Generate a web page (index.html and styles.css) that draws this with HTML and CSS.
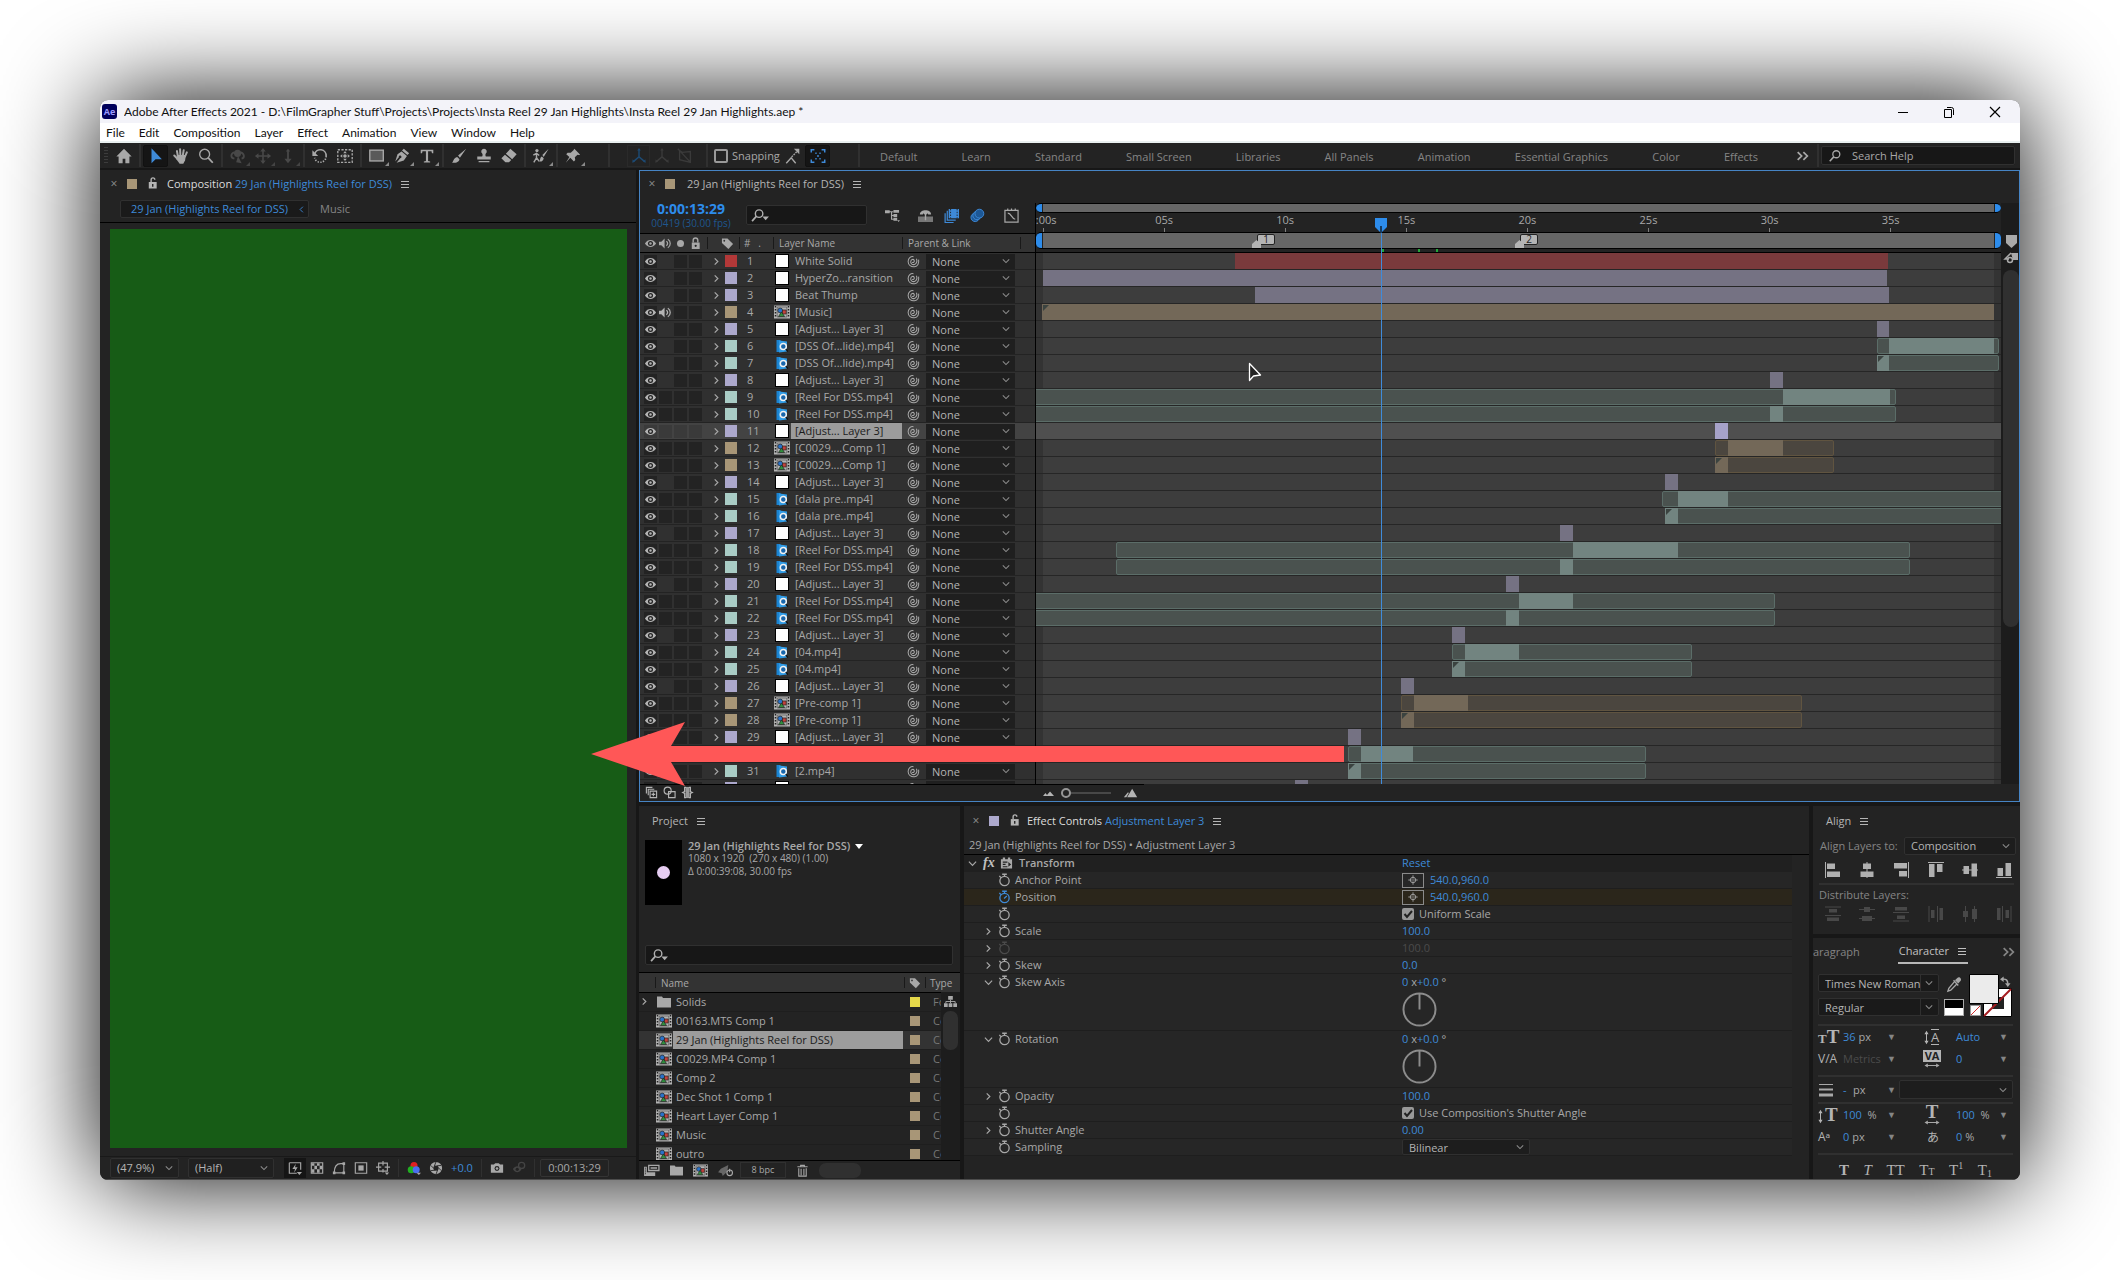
FILE: index.html
```html
<!DOCTYPE html>
<html lang="en">
<head>
<meta charset="utf-8">
<title>Adobe After Effects 2021</title>
<link rel="stylesheet" href="styles.css">
</head>
<body>
<svg class="defs" aria-hidden="true">
  <symbol id="home" viewBox="0 0 20 20"><path fill="currentColor" d="M10 2 1.500 10.500H4V18h4.500v-5h3v5H16v-7.500h2.500z"/></symbol>
  <symbol id="arrow" viewBox="0 0 20 20"><path fill="currentColor" d="M5 1.500V18l4.500-4.500h7z"/></symbol>
  <symbol id="hand" viewBox="0 0 20 20"><path fill="none" stroke="currentColor" stroke-width="2.200" stroke-linecap="round" d="M6.500 10 5.500 4.500M9.300 9.500 9 2.500M12 9.500l1-6M14.500 10.500l2-4.500M6 13 2.500 9.500"/><path fill="currentColor" d="M5.500 9h10l-1 6-2 3.500h-4L5 14z"/></symbol>
  <symbol id="zoom" viewBox="0 0 20 20"><g fill="none" stroke="currentColor"><circle cx="8.500" cy="8" r="5.500" stroke-width="1.500"/><path stroke-width="2" d="m12.500 12 5 5.500"/></g></symbol>
  <symbol id="orbit" viewBox="0 0 20 20"><g fill="none" stroke="currentColor" stroke-width="2"><path d="M6 6C2 7 1 12 6 13M13 6c4 1 5 6 1 7"/></g><circle cx="9.500" cy="7" r="4" fill="currentColor"/><path fill="currentColor" d="m10 10 4 8-6-1z"/></symbol>
  <symbol id="move" viewBox="0 0 20 20"><path fill="none" stroke="currentColor" stroke-width="1.800" d="M10 3v14M3 10h14"/><path fill="currentColor" d="m10 1 3 4H7zM10 19l3-4H7zM1 10l4-3v6zM19 10l-4-3v6z"/></symbol>
  <symbol id="dolly" viewBox="0 0 20 20"><path fill="currentColor" d="m10 2 2.500 3H11v8h3l-4 5-4-5h3V5H7.500z"/></symbol>
  <symbol id="rotate" viewBox="0 0 20 20"><path fill="none" stroke="currentColor" stroke-width="1.800" d="M4 8a6.500 6.500 0 0 1 12.800 2"/><path fill="none" stroke="currentColor" stroke-width="1.800" stroke-dasharray="1.500 1.500" d="M16.800 10A6.500 6.500 0 0 1 4 12"/><path fill="currentColor" d="M1.500 3.500v6.500H8z"/></symbol>
  <symbol id="panbehind" viewBox="0 0 20 20"><rect x="2" y="3" width="16" height="14" fill="none" stroke="currentColor" stroke-width="1.500" stroke-dasharray="2.500 1.500"/><circle cx="10" cy="10" r="2" fill="currentColor"/><path fill="currentColor" d="m10 4.500 2 2.500H8zM10 15.500 12 13H8zM4.500 10 7 8v4zM15.500 10 13 8v4z"/></symbol>
  <symbol id="rect" viewBox="0 0 20 20"><rect x="2" y="3.500" width="15" height="12" fill="#5a5a5a" stroke="currentColor" stroke-width="1.500"/></symbol>
  <symbol id="pen" viewBox="0 0 20 20"><path fill="currentColor" d="m12 2 6 5-2 2-6-5zM9.500 5l6 5-3.500 5L4 17.500l4-5a1.500 1.500 0 1 0-1.500-1L2.500 16 5 8z"/></symbol>
  <symbol id="type" viewBox="0 0 20 20"><path fill="currentColor" d="M3 3h14v4h-1.500L15 4.800h-3.800V15.500l2.300.5v1.200h-7V16l2.300-.5V4.800H5L4.500 7H3z"/></symbol>
  <symbol id="brush" viewBox="0 0 20 20"><path fill="currentColor" d="M18 2 9 9.500l2 2.500zM8 11l2.500 2.500C10 17 6 18 2 17.500c2-1 1.500-5.500 6-6.500z"/></symbol>
  <symbol id="stamp" viewBox="0 0 20 20"><path fill="currentColor" d="M10 2a3 3 0 0 1 2 5.300c-1 1.500 0 3.200 0 3.200h5.500V14h-15v-3.500H8s1-1.700 0-3.200A3 3 0 0 1 10 2zM4 15.500h12V17H4z"/></symbol>
  <symbol id="eraser" viewBox="0 0 20 20"><path fill="currentColor" d="m11.500 2 7 6-5 5.500-7-6zM5.500 8.500l7 6L10 17H6l-4.500-4.500z"/></symbol>
  <symbol id="roto" viewBox="0 0 20 20"><circle cx="5.500" cy="4" r="1.800" fill="currentColor"/><path fill="none" stroke="currentColor" stroke-width="1.600" d="M1.500 9 5 7l3 2.500M5 7v5l-3 5M5 12l3 4"/><path fill="currentColor" d="m18.500 2-7 7 1.500 2zM11 10.500l2 2C12.500 16 10 16.500 8 16c1.500-1 .5-4.500 3-5.500z"/></symbol>
  <symbol id="pin" viewBox="0 0 20 20"><path fill="currentColor" d="m11.500 2 6.500 6.500-1.500.5-1.500-.5-3 3 .5 3-1.500 1.500-4-4-5 5.500 4-6.500L2.500 8l1.500-1.500h3.500l3-3z"/></symbol>
  <symbol id="axis" viewBox="0 0 20 20"><path fill="none" stroke="currentColor" stroke-width="1.600" d="M10 3v8l-6 5M10 11l6 5"/><path fill="currentColor" d="m10 1 2 3H8zM2.500 17.500l.5-4 2.500 3zM17.500 17.500l-.5-4-2.500 3z"/></symbol>
  <symbol id="axisview" viewBox="0 0 20 20"><path fill="none" stroke="currentColor" stroke-width="1.500" d="M4 4v10l12 3V5l-9 1zM4 4l12 13M2 2l3 3"/></symbol>
  <symbol id="snapa" viewBox="0 0 20 20"><path fill="none" stroke="currentColor" stroke-width="1.500" d="m2.500 18 5.500-6 5 6"/><path stroke="currentColor" stroke-width="1.500" stroke-dasharray="2 1" d="m8.500 11 6-6"/><path fill="currentColor" d="M11 2h6v6z"/></symbol>
  <symbol id="snapb" viewBox="0 0 20 20"><path fill="none" stroke="currentColor" stroke-width="1.600" d="M2.500 6V3H6M14 3h3.500v3M17.500 14v3H14M6 17H2.500v-3M7 7h1.500M11.500 7H13M7 13h1.500M11.500 13H13M10 9v2"/></symbol>
  <symbol id="search" viewBox="0 0 16 16"><circle cx="9.500" cy="6" r="4" fill="none" stroke="currentColor" stroke-width="1.500"/><path stroke="currentColor" stroke-width="1.800" d="M6.500 9 2 14"/></symbol>
  <symbol id="searchmenu" viewBox="0 0 20 16"><circle cx="8.500" cy="6" r="4" fill="none" stroke="currentColor" stroke-width="1.500"/><path stroke="currentColor" stroke-width="1.800" d="M5.500 9 1 14"/><path fill="currentColor" d="M12 9h7l-3.500 4z"/></symbol>
  <symbol id="more" viewBox="0 0 16 16"><path fill="none" stroke="currentColor" stroke-width="2" d="m2.500 3.500 4.500 4.500-4.500 4.500M9 3.500 13.500 8 9 12.500"/></symbol>
  <symbol id="lock" viewBox="0 0 14 14"><path fill="currentColor" d="M3 6h8.500v7H3z"/><path fill="none" stroke="currentColor" stroke-width="1.500" d="M4.500 6V3.500a2.500 2.500 0 0 1 5 0V6"/><circle cx="7.200" cy="9.500" r="1.200" fill="#232323"/></symbol>
  <symbol id="unlock" viewBox="0 0 14 14"><path fill="currentColor" d="M3 6h8.500v7H3z"/><path fill="none" stroke="currentColor" stroke-width="1.500" d="M5.500 6V3.500a2 2 0 0 1 4 0"/><path fill="#232323" d="M6.500 8h1.500v3H6.500z"/></symbol>
  <symbol id="menu" viewBox="0 0 10 10"><path stroke="currentColor" stroke-width="1.200" d="M1 2h8M1 5h8M1 8h8"/></symbol>
  <symbol id="chev" viewBox="0 0 10 10"><path fill="none" stroke="currentColor" stroke-width="1.300" d="m1 3 4 4 4-4"/></symbol>
  <symbol id="twirl" viewBox="0 0 10 10"><path fill="none" stroke="currentColor" stroke-width="1.300" d="m3 1.500 3.500 3.500L3 8.500"/></symbol>
  <symbol id="eye" viewBox="0 0 14 14"><path fill="currentColor" d="M1 7c3-5 9-5 12 0-3 5-9 5-12 0z"/><circle cx="7" cy="7" r="2.700" fill="#232323"/><circle cx="7" cy="7" r="1.300" fill="currentColor"/></symbol>
  <symbol id="speaker" viewBox="0 0 14 14"><path fill="currentColor" d="M0 5h2.500L6 1.500v11L2.500 9H0z"/><path fill="none" stroke="currentColor" stroke-width="1.300" d="M8 4.500c1.500 1.500 1.500 3.500 0 5M9.500 2.500c3.500 2 3.500 7 0 9"/></symbol>
  <symbol id="tag" viewBox="0 0 14 14"><path fill="currentColor" d="M1 1.500h6l6 6-5 5.500-7-6.500z"/><circle cx="3.500" cy="4" r="1" fill="#333"/></symbol>
  <symbol id="whip" viewBox="0 0 14 14"><path fill="none" stroke="currentColor" stroke-width="1.100" d="M5.500 8C7 8.500 8.300 7.200 7.800 5.800 7 4 4.300 4.500 4 7c-.2 2.500 2 3.800 4 3.200 2.500-.8 3.200-3.500 2.200-6.200M7 1.800C4 1.200 1.300 3.500 1.200 7c0 3.800 3.300 6 6.800 5.600 3.500-.5 5.200-3.600 4.500-7.600"/></symbol>
  <symbol id="comp" viewBox="0 0 16 14"><path fill="#b4b4b4" d="M0 .5h16v13H0z"/><path stroke="#222" stroke-width="1.500" stroke-dasharray="1.500 1.500" d="M1.500 1v12M14.500 1v12"/><path fill="none" stroke="#444" stroke-width=".6" d="M3.200 2h9.600v10H3.200z"/><circle cx="6.200" cy="5.500" r="2.400" fill="#2a72c8" stroke="#222" stroke-width=".7"/><path fill="#c3423c" stroke="#222" stroke-width=".7" d="M8.500 5h3.700v4H8.500z"/><path fill="#2f8f3c" stroke="#222" stroke-width=".7" d="m7.500 7 3 4.500H4.500z"/></symbol>
  <symbol id="clip" viewBox="0 0 14 14"><path fill="#1b84d2" d="M1.500 1h4v12h-4z"/><path fill="#2f9be6" d="m4 1.500 8 1v10l-8 1z"/><circle cx="8.300" cy="7.500" r="3" fill="#1766ac" stroke="#f2f2f2" stroke-width="1.500"/><path stroke="#111" stroke-width="1.300" d="m10.800 10 2 2.500"/></symbol>
  <symbol id="folder" viewBox="0 0 16 14"><path fill="currentColor" d="M1 1.500h5l1 1.500h8V12.500H1z"/></symbol>
  <symbol id="flow" viewBox="0 0 14 14"><path fill="currentColor" d="M4.500 1h5v4h-5zM0 9h4v4H0zM5 9h4v4H5zM10 9h4v4h-4z"/><path fill="none" stroke="currentColor" d="M7 5v4M2 9V7h10v2"/></symbol>
  <symbol id="tree" viewBox="0 0 16 16"><path fill="none" stroke="currentColor" stroke-width="1.300" d="M4 4h5M7 4v8h3M7 8h3"/><path fill="currentColor" d="M0 2.500h5v3H0zM9 2h6v3H9zM9 6.500h4v3H9zM9 10.500h4v3H9zM13 13h3l-1.500 2z"/></symbol>
  <symbol id="shy" viewBox="0 0 16 16"><path fill="currentColor" d="M2 7c0-3 3-4.500 6-4.500S14 4 14 7h-3l-1-1.500-1 1.500H7L6 5.500 5 7z"/><path fill="#777" d="M0 9h16v6H0z"/><path stroke="currentColor" stroke-width="1.500" d="M8 6v7"/></symbol>
  <symbol id="blend" viewBox="0 0 16 16"><path fill="currentColor" d="M5 1h11v10H5z"/><path fill="none" stroke="currentColor" stroke-width="1.300" d="M3.500 3v10h9M1.200 5.500v10h9"/><path stroke="#232323" stroke-dasharray="1.500 1.500" d="M7 1v10M14 1v10"/></symbol>
  <symbol id="blur" viewBox="0 0 16 16"><g fill="#1d5896" stroke="currentColor"><circle cx="5.500" cy="10" r="4.500"/><circle cx="7.500" cy="8" r="4.500"/><circle cx="10" cy="6" r="4.700"/></g></symbol>
  <symbol id="graph" viewBox="0 0 16 16"><path fill="none" stroke="currentColor" stroke-width="1.300" d="M1 2.500h14V15H1zM4 .5v2M8 .5v2M12 .5v2M4 5.500c4 0 4 6 8 6.500"/></symbol>
  <symbol id="watch" viewBox="0 0 14 14"><g fill="none" stroke="currentColor"><circle cx="7" cy="8" r="5" stroke-width="1.400"/><path stroke-width="1.400" d="M4.500 .8h5M7 1v2.500M1.500 2.500 3 4.500"/></g></symbol>
  <symbol id="watchon" viewBox="0 0 14 14"><g fill="none" stroke="currentColor"><circle cx="7" cy="8" r="5" stroke-width="1.400"/><path stroke-width="1.400" d="M4.500 .8h5M7 1v2.500M1.500 2.500 3 4.500M6.500 8.500 9.500 6"/></g></symbol>
  <symbol id="target" viewBox="0 0 14 14"><g fill="none" stroke="currentColor"><circle cx="7" cy="7" r="3.200"/><path d="M7 1.500v4M7 8.500v4M1.500 7h4M8.500 7h4"/></g><circle cx="7" cy="7" r=".8" fill="currentColor"/></symbol>
  <symbol id="plugin" viewBox="0 0 14 14"><path fill="currentColor" d="M1 3h2V1h2.500v2h3V1H11v2h2v10H1z"/><path stroke="#222" stroke-width="1.200" d="M3 6h5M3 8.500h3M3 11h5"/><path fill="#222" d="m9 6 3 2.500L9 11z"/></symbol>
  <symbol id="al" viewBox="0 0 18 18"><path fill="currentColor" d="M1 1h1v16H1zM3 2.500h8V8H3zM3 10.500h13V16H3z"/></symbol>
  <symbol id="ac" viewBox="0 0 18 18"><path fill="currentColor" d="M8.500 1h1v16h-1zM5 2.500h8V8H5zM2.500 10.500h13V16h-13z"/></symbol>
  <symbol id="dv" viewBox="0 0 18 18"><path fill="currentColor" d="M1 1.500h16v1H1zM5 4h8v3.500H5zM1 10h16v1H1zM3 12.500h12V16H3z"/></symbol>
  <symbol id="dc" viewBox="0 0 18 18"><path fill="currentColor" d="M1 4h16v1H1zM6 2h6v5H6zM1 13h16v1H1zM4 11h10v5H4z"/></symbol>
  <symbol id="bolt" viewBox="0 0 16 16"><path fill="none" stroke="currentColor" stroke-width="1.300" d="M1.500 2h13v8M10 14H1.500V2"/><path fill="currentColor" d="m9 3-4 6h3l-1 4.500L11 7H8zM10 12.500h6L13 16z"/></symbol>
  <symbol id="grid" viewBox="0 0 16 16"><path fill="none" stroke="currentColor" stroke-width="1.300" d="M1.500 2h13v12h-13z"/><path fill="currentColor" d="M2 2.500h3v3H2zM8 2.500h3v3H8zM5 5.500h3v4H5zM11 5.500h3v4h-3zM2 9.500h3v4H2zM8 9.500h3v4H8z"/></symbol>
  <symbol id="mask" viewBox="0 0 16 16"><path fill="none" stroke="currentColor" stroke-width="1.300" d="M2.500 13.500C2.500 7 5 3 10 3h3.500v10.500z"/><path fill="currentColor" d="M1 12h3v3H1zM12 12h3v3h-3zM12 1.500h3v3h-3z"/></symbol>
  <symbol id="roi" viewBox="0 0 16 16"><path fill="none" stroke="currentColor" stroke-width="1.300" d="M1.500 2h13v12h-13z"/><path fill="currentColor" d="M5 5h6v6H5z"/></symbol>
  <symbol id="guides" viewBox="0 0 16 16"><path fill="none" stroke="currentColor" stroke-width="1.300" d="M3 2.500h10v9H3zM0 7h6M10 7h6M8 0v5M8 9v4"/><path fill="currentColor" d="M10 13h5l-2.500 3z"/></symbol>
  <symbol id="rgb" viewBox="0 0 16 16"><circle cx="8" cy="5" r="4" fill="#e02020"/><circle cx="4.800" cy="10" r="4" fill="#21b021"/><circle cx="10.500" cy="10" r="4" fill="#4a6ef0"/><path fill="currentColor" d="M11 13.500h5L13.500 16z"/></symbol>
  <symbol id="shutter" viewBox="0 0 16 16"><circle cx="8" cy="8" r="5" fill="none" stroke="currentColor" stroke-width="4"/><path stroke="#232323" stroke-width="1" d="M8 1 6 6M14 5l-5 .5M14 11l-3.500-3.500M8 15l2-5M2 11l5-.5M2 5l3.500 3.500"/></symbol>
  <symbol id="camera" viewBox="0 0 16 16"><path fill="currentColor" d="M1 4h3.500L6 2.500h4L11.500 4H15v9.500H1z"/><circle cx="8" cy="8.500" r="2.800" fill="#232323"/><circle cx="8" cy="8.500" r="1.500" fill="currentColor"/></symbol>
  <symbol id="snapshow" viewBox="0 0 16 16"><circle cx="11" cy="5" r="3.500" fill="none" stroke="currentColor" stroke-width="1.500"/><path fill="currentColor" d="M1 9c3-4 7-4 10 0-3 5-7 5-10 0z"/><circle cx="6" cy="9.500" r="1.800" fill="#232323"/></symbol>
  <symbol id="stack" viewBox="0 0 14 14"><path fill="none" stroke="currentColor" stroke-width="1.200" d="M5.500 5.500h7v7h-7zM3.500 10V3.500H10M1.500 8V1.500H8M9 7v4M7 9h4"/></symbol>
  <symbol id="circles" viewBox="0 0 14 14"><g fill="none" stroke="currentColor" stroke-width="1.200"><circle cx="5" cy="5" r="3.800"/><path d="M6 6h7v6.500H6z"/></g></symbol>
  <symbol id="braces" viewBox="0 0 14 14"><path fill="#9a9a9a" d="M5 1h4v12H5z"/><path fill="none" stroke="currentColor" stroke-width="1.500" d="M5.500 1.500H4V6L2 7l2 1v4.500h1.500M8.500 1.500H10V6l2 1-2 1v4.500H8.500"/></symbol>
  <symbol id="interpret" viewBox="0 0 18 14"><path fill="none" stroke="currentColor" stroke-width="1.400" d="M6 1.500h11v5.500H6zM8 4.300h7"/><path fill="currentColor" d="M1 3h3v6h9v4H1z"/><path stroke="#232323" stroke-dasharray="1 1" d="M2.500 4v8"/></symbol>
  <symbol id="rocket" viewBox="0 0 18 14"><path fill="currentColor" d="m1 9 3-4 8-4-1 7-5 5-1-3z"/><circle cx="13.500" cy="9.500" r="3" fill="none" stroke="#aaa" stroke-width="1.200"/><path stroke="#aaa" stroke-width="1.200" d="M13.500 5v4"/></symbol>
  <symbol id="trash" viewBox="0 0 14 14"><path fill="none" stroke="currentColor" stroke-width="1.200" d="M1.500 3h11M5 3V1.500h4V3M3 4.500V13h8V4.500M5.500 5v7M8.500 5v7"/></symbol>
  <symbol id="dropper" viewBox="0 0 18 18"><path fill="currentColor" d="M12 2c2-2 5 1 3.500 3L13 8l-3.500-3.500z"/><path fill="none" stroke="currentColor" stroke-width="1.400" d="M8 4.500 13 10M9 6l-6 7-1 3 3-1 6.500-6.500"/></symbol>
  <symbol id="swap" viewBox="0 0 12 12"><path fill="none" stroke="currentColor" stroke-width="1.600" d="M3 3.500c4-.5 5.500 1.500 5.500 5"/><path fill="currentColor" d="M0 3.500 4 .5v6zM8.500 12 5.500 8h6z"/></symbol>
  <symbol id="updown" viewBox="0 0 6 16"><path fill="none" stroke="currentColor" stroke-width="1.200" d="M3 3v10"/><path fill="currentColor" d="m3 0 2.500 4h-5zM3 16l2.500-4h-5z"/></symbol>
  <symbol id="leftright" viewBox="0 0 18 6"><path fill="none" stroke="currentColor" stroke-width="1.200" d="M3 3h12"/><path fill="currentColor" d="m0 3 4-2.500v5zM18 3l-4-2.500v5z"/></symbol>
  <symbol id="lines" viewBox="0 0 16 14"><path fill="currentColor" d="M1 1h14v1H1zM1 5.500h14v2H1zM1 10.500h14v3H1z"/></symbol>
  <symbol id="hillS" viewBox="0 0 14 10"><path fill="currentColor" d="M2 8l2.500-3L6 7l3-3.500L13 8z"/></symbol>
  <symbol id="hillL" viewBox="0 0 18 12"><path fill="currentColor" d="m1 11 5-6 1 1-3 5zM5 11l6-10 6 10z"/></symbol>
</svg>

<div class="window">
  <header class="titlebar">
    <span class="ae">Ae</span>
    <span class="title">Adobe After Effects 2021 - D:\FilmGrapher Stuff\Projects\Projects\Insta Reel 29 Jan Highlights\Insta Reel 29 Jan Highlights.aep *</span>
    <button class="win" aria-label="Minimize"><svg width="12" height="12"><path stroke="#000" d="M1 6.500h10"/></svg></button>
    <button class="win" aria-label="Restore"><svg width="12" height="12"><path fill="none" stroke="#000" d="M1.500 3.500h7v8h-7zM4 1.500h4.500a2 2 0 0 1 2 2V9"/></svg></button>
    <button class="win" aria-label="Close"><svg width="12" height="12"><path stroke="#000" stroke-width="1.200" d="m1 1 10 10M11 1 1 11"/></svg></button>
  </header>
  <nav class="menubar">
    <button>File</button><button>Edit</button><button>Composition</button><button>Layer</button><button>Effect</button><button>Animation</button><button>View</button><button>Window</button><button>Help</button>
  </nav>

  <div class="toolbar">
    <span class="grip"></span>
    <button class="tool" aria-label="Home"><svg><use href="#home"/></svg></button><i class="sep"></i>
    <button class="tool on" aria-label="Selection"><svg><use href="#arrow"/></svg></button>
    <button class="tool" aria-label="Hand"><svg><use href="#hand"/></svg></button>
    <button class="tool" aria-label="Zoom"><svg><use href="#zoom"/></svg></button><i class="sep"></i>
    <button class="tool dim sub" aria-label="Orbit"><svg><use href="#orbit"/></svg></button>
    <button class="tool dim sub" aria-label="Pan"><svg><use href="#move"/></svg></button>
    <button class="tool dim sub" aria-label="Dolly"><svg><use href="#dolly"/></svg></button><i class="sep"></i>
    <button class="tool" aria-label="Rotation"><svg><use href="#rotate"/></svg></button>
    <button class="tool" aria-label="Pan Behind"><svg><use href="#panbehind"/></svg></button><i class="sep"></i>
    <button class="tool sub" aria-label="Rectangle"><svg><use href="#rect"/></svg></button>
    <button class="tool sub" aria-label="Pen"><svg><use href="#pen"/></svg></button>
    <button class="tool sub" aria-label="Type"><svg><use href="#type"/></svg></button><i class="sep"></i>
    <button class="tool" aria-label="Brush"><svg><use href="#brush"/></svg></button>
    <button class="tool" aria-label="Clone Stamp"><svg><use href="#stamp"/></svg></button>
    <button class="tool" aria-label="Eraser"><svg><use href="#eraser"/></svg></button><i class="sep"></i>
    <button class="tool sub" aria-label="Roto Brush"><svg><use href="#roto"/></svg></button><i class="sep"></i>
    <button class="tool sub" aria-label="Puppet Pin"><svg><use href="#pin"/></svg></button>
    <i class="sep far"></i>
    <div class="axes">
      <button class="tool boxed blue" aria-label="Local Axis"><svg><use href="#axis"/></svg></button>
      <button class="tool dim" aria-label="World Axis"><svg><use href="#axis"/></svg></button>
      <button class="tool dim" aria-label="View Axis"><svg><use href="#axisview"/></svg></button>
    </div>
    <i class="sep"></i>
    <label class="snap"><input type="checkbox">Snapping</label>
    <button class="tool" aria-label="Snap edges"><svg><use href="#snapa"/></svg></button>
    <button class="tool on" aria-label="Snap features"><svg><use href="#snapb"/></svg></button>
    <i class="sep mid"></i>
    <nav class="workspaces">
      <button>Default</button><button>Learn</button><button>Standard</button><button>Small Screen</button><button>Libraries</button><button>All Panels</button><button>Animation</button><button>Essential Graphics</button><button>Color</button><button>Effects</button>
    </nav>
    <button class="more" aria-label="More workspaces"><svg><use href="#more"/></svg></button>
    <i class="sep"></i>
    <div class="help"><svg><use href="#search"/></svg><input type="text" aria-label="Search Help" placeholder="Search Help"></div>
  </div>

  <main class="work">
    <section class="panel viewer">
      <div class="tabs">
        <button class="x" aria-label="Close">×</button><i class="chip tan"></i><svg class="lk"><use href="#unlock"/></svg>
        <span class="lit">Composition <a href="#viewer">29 Jan (Highlights Reel for DSS)</a></span><svg class="mn"><use href="#menu"/></svg>
      </div>
      <div class="crumbs" id="viewer"><button class="crumb">29 Jan (Highlights Reel for DSS)<svg><use href="#chev"/></svg></button><button class="plain">Music</button></div>
      <div class="stage"></div>
      <div class="viewbar">
        <div class="pick zoomp"><select aria-label="Magnification"><option>(47.9%)</option></select><svg><use href="#chev"/></svg></div>
        <div class="pick half"><select aria-label="Resolution"><option>(Half)</option></select><svg><use href="#chev"/></svg></div>
        <button class="vb pressed" aria-label="Fast Previews"><svg><use href="#bolt"/></svg></button>
        <button class="vb" aria-label="Transparency Grid"><svg><use href="#grid"/></svg></button>
        <button class="vb" aria-label="Mask Visibility"><svg><use href="#mask"/></svg></button>
        <button class="vb" aria-label="Region of Interest"><svg><use href="#roi"/></svg></button>
        <button class="vb" aria-label="Guides"><svg><use href="#guides"/></svg></button>
        <i class="bar"></i>
        <button class="vb" aria-label="Channels"><svg><use href="#rgb"/></svg></button>
        <button class="vb" aria-label="Reset Exposure"><svg><use href="#shutter"/></svg></button>
        <button class="val exp">+0.0</button>
        <i class="bar"></i>
        <button class="vb" aria-label="Take Snapshot"><svg><use href="#camera"/></svg></button>
        <button class="vb dim" aria-label="Show Snapshot"><svg><use href="#snapshow"/></svg></button>
        <i class="bar"></i>
        <button class="tc">0:00:13:29</button>
      </div>
    </section>

    <div class="right">
      <section class="timeline">
        <div class="tabs">
          <button class="x" aria-label="Close">×</button><i class="chip tan"></i><span class="tname">29 Jan (Highlights Reel for DSS)</span><svg class="mn"><use href="#menu"/></svg>
        </div>
        <div class="tl">
          <div class="layers">
            <div class="ltools">
              <div class="now"><b>0:00:13:29</b><small>00419 (30.00 fps)</small></div>
              <div class="find"><svg><use href="#searchmenu"/></svg><input type="text" aria-label="Search layers"></div>
              <button class="ti t1" aria-label="Composition Mini-Flowchart"><svg><use href="#tree"/></svg></button>
              <button class="ti t2" aria-label="Hide Shy Layers"><svg><use href="#shy"/></svg></button>
              <button class="ti blue" aria-label="Frame Blending"><svg><use href="#blend"/></svg></button>
              <button class="ti blue" aria-label="Motion Blur"><svg><use href="#blur"/></svg></button>
              <button class="ti t3" aria-label="Graph Editor"><svg><use href="#graph"/></svg></button>
            </div>
            <div class="lrow lhead">
              <svg><use href="#eye"/></svg><svg><use href="#speaker"/></svg><i class="dot"></i><svg><use href="#lock"/></svg>
              <span></span><svg class="tg"><use href="#tag"/></svg><span class="hn">#&nbsp;&nbsp; .</span><span class="hl">Layer Name</span><span class="hp">Parent &amp; Link</span><span class="he"></span>
            </div>
            <div class="lbody" id="layers"></div>
          </div>
          <div class="tracks">
            <div class="navbar"><i class="range"></i></div>
            <div class="ruler" id="ruler"></div>
            <div class="workarea" id="workarea"><i class="range"></i></div>
            <div class="cache" id="cache"></div>
            <div class="tbody" id="tracks"></div>
            <div class="playhead"><svg width="12" height="15"><path fill="#2d8ceb" d="M0 0h12v9l-6 6-6-6z"/><path stroke="#123" stroke-width="1.500" d="M6 8v7"/></svg></div>
          </div>
          <div class="vscroll"><svg width="12" height="13"><path fill="#aaa" d="M1 0h11v8l-5.500 5L1 8z"/></svg><svg width="14" height="12"><path fill="#aaa" d="M7 1h7v7H9z"/><g fill="none" stroke="#aaa" stroke-width="1.500"><circle cx="6" cy="8" r="2.500"/><path d="M7 1 1 7h4"/></g></svg><i class="thumb"></i></div>
        </div>
        <div class="tlfoot">
          <svg><use href="#stack"/></svg><svg><use href="#circles"/></svg><svg><use href="#braces"/></svg>
          <svg class="hs"><use href="#hillS"/></svg><input type="range" min="0" max="10" value="0" aria-label="Timeline zoom"><svg class="hb"><use href="#hillL"/></svg>
        </div>
      </section>

      <div class="bottom">
        <section class="panel project">
          <div class="tabs"><span class="pn">Project</span><svg class="mn"><use href="#menu"/></svg></div>
          <div class="info">
            <div class="preview"><i></i></div>
            <div class="meta"><strong>29 Jan (Highlights Reel for DSS) <i class="tri"></i></strong><span>1080 x 1920 &nbsp;(270 x 480) (1.00)</span><span>Δ 0:00:39:08, 30.00 fps</span></div>
          </div>
          <div class="find wide"><svg><use href="#searchmenu"/></svg><input type="text" aria-label="Search project"></div>
          <div class="plist">
            <table>
              <thead><tr><th class="c1"></th><th class="c2">Name</th><th class="c3"><svg><use href="#tag"/></svg></th><th class="c4">Type</th></tr></thead>
              <tbody id="items"></tbody>
            </table>
            <div class="pscroll"><svg><use href="#flow"/></svg><i></i></div>
          </div>
          <div class="pfoot">
            <svg class="w"><use href="#interpret"/></svg><svg><use href="#folder"/></svg><svg><use href="#comp"/></svg><svg class="w dimc"><use href="#rocket"/></svg>
            <button class="bpc">8 bpc</button><svg><use href="#trash"/></svg><i class="ht"></i>
          </div>
        </section>

        <section class="panel effects">
          <div class="tabs">
            <button class="x" aria-label="Close">×</button><i class="chip lav"></i><svg class="lk"><use href="#unlock"/></svg>
            <span class="lit">Effect Controls <a href="#fx">Adjustment Layer 3</a></span><svg class="mn"><use href="#menu"/></svg>
          </div>
          <div class="subt">29 Jan (Highlights Reel for DSS) • Adjustment Layer 3</div>
          <div class="props" id="fx">
            <div class="prop head"><span class="pl"><svg class="tw"><use href="#chev"/></svg><em>fx</em><svg class="st"><use href="#plugin"/></svg><b>Transform</b></span><button class="val">Reset</button></div>
            <div class="prop"><span class="pl"><i class="tw"></i><svg class="st"><use href="#watch"/></svg>Anchor Point</span><button class="aim" aria-label="Pick point"><svg><use href="#target"/></svg></button><button class="val">540.0</button>,<button class="val">960.0</button></div>
            <div class="prop keyed"><span class="pl"><i class="tw"></i><svg class="st blue"><use href="#watchon"/></svg>Position</span><button class="aim" aria-label="Pick point"><svg><use href="#target"/></svg></button><button class="val">540.0</button>,<button class="val">960.0</button></div>
            <div class="prop"><span class="pl"><i class="tw"></i><svg class="st"><use href="#watch"/></svg></span><label><input type="checkbox" checked>Uniform Scale</label></div>
            <div class="prop"><span class="pl"><svg class="tw"><use href="#twirl"/></svg><svg class="st"><use href="#watch"/></svg>Scale</span><button class="val">100.0</button></div>
            <div class="prop"><span class="pl"><svg class="tw"><use href="#twirl"/></svg><svg class="st off"><use href="#watch"/></svg></span><button class="val off" disabled>100.0</button></div>
            <div class="prop"><span class="pl"><svg class="tw"><use href="#twirl"/></svg><svg class="st"><use href="#watch"/></svg>Skew</span><button class="val">0.0</button></div>
            <div class="prop tall"><span class="pl"><svg class="tw open"><use href="#chev"/></svg><svg class="st"><use href="#watch"/></svg>Skew Axis</span><div class="angle"><span><button class="val">0</button> x<button class="val">+0.0</button> °</span><svg class="dial" viewBox="0 0 36 36"><circle cx="18" cy="18" r="16.500"/><path d="M18 2v16"/></svg></div></div>
            <div class="prop tall"><span class="pl"><svg class="tw open"><use href="#chev"/></svg><svg class="st"><use href="#watch"/></svg>Rotation</span><div class="angle"><span><button class="val">0</button> x<button class="val">+0.0</button> °</span><svg class="dial" viewBox="0 0 36 36"><circle cx="18" cy="18" r="16.500"/><path d="M18 2v16"/></svg></div></div>
            <div class="prop"><span class="pl"><svg class="tw"><use href="#twirl"/></svg><svg class="st"><use href="#watch"/></svg>Opacity</span><button class="val">100.0</button></div>
            <div class="prop"><span class="pl"><i class="tw"></i><svg class="st"><use href="#watch"/></svg></span><label><input type="checkbox" checked>Use Composition's Shutter Angle</label></div>
            <div class="prop"><span class="pl"><svg class="tw"><use href="#twirl"/></svg><svg class="st"><use href="#watch"/></svg>Shutter Angle</span><button class="val">0.00</button></div>
            <div class="prop"><span class="pl"><i class="tw"></i><svg class="st"><use href="#watch"/></svg>Sampling</span><div class="pick bil"><select aria-label="Sampling"><option>Bilinear</option></select><svg><use href="#chev"/></svg></div></div>
          </div>
        </section>

        <div class="side">
          <section class="panel align">
            <div class="tabs"><span class="pn">Align</span><svg class="mn"><use href="#menu"/></svg></div>
            <div class="alto"><label for="alto">Align Layers to:</label><div class="pick"><select id="alto"><option>Composition</option></select><svg><use href="#chev"/></svg></div></div>
            <div class="arow">
              <button aria-label="Align left"><svg><use href="#al"/></svg></button><button aria-label="Align center"><svg><use href="#ac"/></svg></button><button aria-label="Align right"><svg class="r180"><use href="#al"/></svg></button><button aria-label="Align top"><svg class="r90"><use href="#al"/></svg></button><button aria-label="Align middle"><svg class="r270"><use href="#ac"/></svg></button><button aria-label="Align bottom"><svg class="r270"><use href="#al"/></svg></button>
            </div>
            <div class="dist">Distribute Layers:</div>
            <div class="arow faint">
              <button aria-label="Distribute top"><svg><use href="#dv"/></svg></button><button aria-label="Distribute vertical"><svg><use href="#dc"/></svg></button><button aria-label="Distribute bottom"><svg class="r180"><use href="#dv"/></svg></button><button aria-label="Distribute left"><svg class="r270"><use href="#dv"/></svg></button><button aria-label="Distribute horizontal"><svg class="r270"><use href="#dc"/></svg></button><button aria-label="Distribute right"><svg class="r90"><use href="#dv"/></svg></button>
            </div>
          </section>
          <section class="panel char">
            <div class="ctabs"><button>aragraph</button><button class="act">Character<svg class="mn"><use href="#menu"/></svg></button><svg class="mo"><use href="#more"/></svg></div>
            <div class="fonts">
              <div class="fsel">
                <div class="pick"><select aria-label="Font family"><option>Times New Roman</option></select><svg><use href="#chev"/></svg></div>
                <div class="pick"><select aria-label="Font style"><option>Regular</option></select><svg><use href="#chev"/></svg></div>
              </div>
              <div class="fmid"><svg><use href="#dropper"/></svg><i class="bw"></i></div>
              <svg class="sw" width="44" height="44" viewBox="0 0 44 44"><path fill="#fff" stroke="#000" d="M14.500 14.500h28v28h-28z"/><path fill="#222" d="M23 23h12v12H23z"/><path stroke="#a51c20" stroke-width="2" d="m15 42 27-27"/><path fill="#ebebeb" stroke="#000" d="M.5.500h29v29H.5z"/><path fill="#fff" stroke="#999" d="M1.500 31.500h10v10h-10z"/><path stroke="#d03030" d="m2 41 9-9"/><use href="#swap" x="31" y="2" width="11" height="11"/></svg>
            </div>
            <div class="chars">
              <div class="cr"><span class="g"><small>T</small>T</span><span><button class="val">36</button> px</span><i>▼</i><span class="g lead"><svg class="ud"><use href="#updown"/></svg><span>A</span></span><span><button class="val">Auto</button></span><i>▼</i></div>
              <div class="cr"><span class="g sans">V/A</span><span class="metrics">Metrics</span><i>▼</i><span class="stackg"><span class="g inv">VA</span><svg class="lr"><use href="#leftright"/></svg></span><span><button class="val">0</button></span><i>▼</i></div>
            </div>
            <div class="strokerow"><svg class="ln"><use href="#lines"/></svg><button class="val">-</button><span>px</span><i>▼</i><div class="pick"><select aria-label="Stroke order"><option></option></select><svg><use href="#chev"/></svg></div></div>
            <div class="chars">
              <div class="cr"><span class="g"><svg class="ud"><use href="#updown"/></svg>T</span><span><button class="val">100</button> &nbsp;%</span><i>▼</i><span class="stackg"><span class="g wide-t">T</span><svg class="lr"><use href="#leftright"/></svg></span><span><button class="val">100</button> &nbsp;%</span><i>▼</i></div>
              <div class="cr"><span class="g sans">A<small>ª</small></span><span><button class="val">0</button> px</span><i>▼</i><span class="g jp">あ</span><span><button class="val">0</button> %</span><i>▼</i></div>
            </div>
            <div class="styles"><button><b>T</b></button><button><em>T</em></button><button>TT</button><button>T<small>T</small></button><button>T<sup>1</sup></button><button>T<sub>1</sub></button></div>
          </section>
        </div>
      </div>
    </div>
  </main>

  <svg class="callout" width="754" height="64" viewBox="0 0 754 64"><path fill="#ff5757" d="M0 32 94 0 80 24H753V40H80L94 64z"/></svg>
  <svg class="cursor" width="14" height="20" viewBox="0 0 14 20"><path fill="#222" stroke="#fff" stroke-width="1.300" stroke-linejoin="round" d="M1.500 1.500v17l4-4.500 7-1z"/></svg>
</div>
<script src="app.js"></script>
</body>
</html>
```
FILE: styles.css
```css
* { box-sizing: border-box; }
html, body { margin: 0; }
body { position: relative; background: #fff; min-height: 100vh; padding: 100px; font: 11px/16px "Open Sans", "Noto Sans", sans-serif; color: #a8a8a8; }
body::before { content: ""; position: absolute; inset: 100px; border-radius: 8px; box-shadow: 0 0 100px #000; }
button, input, select { font: inherit; color: inherit; background: none; border: 0; padding: 0; margin: 0; border-radius: 0; outline: 0; white-space: nowrap; }
select { appearance: none; width: 100%; height: 100%; }
input[type=text] { min-width: 0; flex: 1; }
input::placeholder { color: #a8a8a8; opacity: 1; }
svg { display: block; flex: none; overflow: visible; }
a { color: #3e8ad8; text-decoration: none; }
.defs { position: absolute; width: 0; height: 0; }
.blue, .val { color: #3e8ad8; }

.window { position: relative; height: calc(100vh - 200px); min-height: 900px; display: flex; flex-direction: column; background: #171717; border-radius: 8px; overflow: hidden; }

.titlebar { height: 23px; flex: none; background: #f3f3f9; color: #111; display: flex; align-items: center; padding: 0 18px 0 2px; font: 12px/20px Lato, sans-serif; }
.ae { width: 15px; height: 15px; margin-right: 7px; border-radius: 3px; background: #00005b; color: #9a9aff; font: bold 9px/15px "Open Sans", sans-serif; text-align: center; }
.title { flex: 1; white-space: nowrap; overflow: hidden; }
.win { width: 13px; margin-left: 33px; }
.menubar { height: 20px; flex: none; background: #fff; border-bottom: 2px solid #e9f0f0; color: #111; display: flex; gap: 14px; padding-left: 6px; font: 12px/20px Lato, sans-serif; }

.toolbar { height: 25px; flex: none; margin-bottom: 2px; background: #232323; display: flex; align-items: center; padding: 0 5px 0 4px; color: #a8a8a8; }
.grip { width: 4px; height: 17px; margin-right: 3px; background: repeating-linear-gradient(#3c3c3c 0 1px, transparent 1px 3px); }
.tool { position: relative; width: 25px; height: 22px; display: grid; place-items: center; flex: none; }
.tool svg { width: 18px; height: 18px; }
.tool.on { background: #151515; border: 1px solid #111; border-radius: 2px; color: #3e8ad8; }
.tool.dim { color: #484848; }
.tool.sub::after { content: ""; position: absolute; right: 0; bottom: 1px; border: 2px solid transparent; border-right-color: #8a8a8a; border-bottom-color: #8a8a8a; }
.tool.dim.sub::after { border-right-color: #444; border-bottom-color: #444; }
.sep { width: 7px; height: 23px; flex: none; background: linear-gradient(#303030, #303030) center / 2px 100% no-repeat; }
.sep.far { margin: 0 15px 0 20px; }
.sep.mid { margin: 0 18px 0 25px; }
.axes { display: flex; margin-right: 7px; }
.axes .tool { width: 23px; }
.axes .blue { color: #1d4a73; border: 1px solid #2a2a2a; }
.axes .dim { color: #3a3a3a; }
.snap { display: flex; align-items: center; gap: 4px; width: 66px; margin-left: 4px; line-height: 18px; }
.snap input { appearance: none; width: 14px; height: 14px; border: 2px solid #999; border-radius: 2px; }
.workspaces { flex: 1; min-width: 0; overflow: hidden; display: flex; justify-content: space-between; padding-top: 2px; color: #858585; }
.more { margin: 0 4px 0 37px; }
.more svg, .mo { width: 15px; height: 14px; }
.help { width: 194px; height: 19px; display: flex; align-items: center; gap: 10px; padding-left: 6px; background: #171717; border: 1px solid #303030; border-radius: 2px; }
.help svg { width: 14px; height: 14px; }
.help input { padding-top: 1px; }

.work { flex: 1; min-height: 0; display: grid; grid-template-columns: minmax(0, 536fr) minmax(0, 1381fr); gap: 3px; border-bottom: 1px solid #4c4c4c; }
.panel { background: #232323; min-width: 0; min-height: 0; overflow: hidden; display: flex; flex-direction: column; }
.tabs { height: 28px; flex: none; display: flex; align-items: center; white-space: nowrap; color: #b4b4b4; }
.x { width: 10px; color: #909090; font-size: 12px; }
.chip { width: 10px; height: 10px; flex: none; }
.tan { background: #a89677; }
.lav { background: #aca8cc; }
.lk { width: 13px; height: 14px; margin: 0 8px 3px 9px; }
.mn { width: 10px; height: 11px; margin-left: 8px; }
.lit { color: #dcdcdc; }

.viewer .tabs { padding-left: 9px; }
.viewer .x, .effects .x { margin-right: 8px; }
.crumbs { height: 25px; flex: none; display: flex; align-items: center; padding: 0 0 2px 20px; border-bottom: 1px solid #000; color: #858585; }
.crumb { width: 189px; height: 18px; display: flex; align-items: center; justify-content: space-between; padding: 0 3px 0 10px; border: 1px solid #303030; border-radius: 2px; background: #1a1a1a; color: #3e8ad8; }
.crumb svg { width: 7px; height: 7px; transform: rotate(90deg); }
.plain { margin-left: 11px; }
.stage { flex: 1; margin: 6px 9px 8px 10px; background: #175c16; }
.viewbar { height: 23px; flex: none; border-top: 1px solid #191919; display: flex; align-items: center; padding-left: 10px; }
.pick { position: relative; border: 1px solid #303030; border-radius: 2px; background: #1d1d1d; color: #b4b4b4; }
.pick select { padding: 0 16px 0 6px; display: block; }
.pick svg { position: absolute; right: 5px; top: calc(50% - 4px); width: 8px; height: 8px; color: #8c8c8c; pointer-events: none; }
.viewbar .pick { height: 20px; background: #202020; flex: none; }
.zoomp { width: 69px; margin-right: 9px; }
.half { width: 86px; margin-right: 10px; }
.vb { width: 22px; height: 20px; display: grid; place-items: center; flex: none; }
.vb svg { width: 14px; height: 14px; }
.vb.pressed { background: #151515; }
.vb.dim { color: #444; }
.bar { width: 1px; height: 18px; background: #303030; margin: 0 4px; }
.exp { width: 30px; }
.tc { width: 69px; height: 18px; margin-left: 1px; border: 1px solid #343434; border-radius: 2px; }

.right { min-width: 0; min-height: 0; display: grid; grid-template-rows: minmax(0, 633fr) minmax(0, 373fr); gap: 4px; }
.timeline { min-height: 0; display: flex; flex-direction: column; background: #232323; border: 1px solid #4684c4; }
.timeline .tabs { height: 32px; padding: 0 0 6px 7px; }
.timeline .x { margin-right: 8px; }
.tname { margin-left: 12px; }
.tl { flex: 1; min-height: 0; display: flex; }
.layers { width: 396px; flex: none; border-right: 1px solid #000; background: #303030; display: flex; flex-direction: column; }
.ltools { height: 31px; flex: none; display: flex; background: #232323; border-bottom: 1px solid #000; padding-left: 9px; }
.now { width: 84px; margin: -3px 13px 0 0; text-align: center; white-space: nowrap; }
.now b { display: block; font-size: 14px; line-height: 17px; color: #2d8ceb; }
.now small { display: block; font-size: 10px; line-height: 13px; color: #1f578f; }
.find { display: flex; align-items: center; width: 121px; height: 20px; margin-top: 2px; padding-left: 4px; background: #171717; border: 1px solid #303030; border-radius: 2px; }
.find svg { width: 19px; height: 15px; color: #b0b0b0; }
.ti { width: 26px; height: 24px; display: grid; place-items: center; }
.ti svg { width: 15px; height: 15px; }
.ti.t1 { margin-left: 12px; }
.ti.t2 { margin-left: 7px; }
.ti.t3 { margin-left: 8px; }
.lrow { height: 17px; flex: none; display: grid; grid-template-columns: 15px 15px 15px 18px 18px 18px 31px 17px 111px 24px 89px; align-items: center; padding-left: 4px; border-bottom: 1px solid #232323; white-space: nowrap; }
.lhead { height: 19px; background: #333; border-bottom: 1px solid #000; font-size: 10px; grid-template-columns: 15px 15px 15px 18px 14px 18px 34px 129px 118px 10px; }
.lhead svg { width: 13px; height: 13px; }
.lhead span { border-left: 1px solid #191919; height: 12px; line-height: 13px; }
.lhead .hn { padding-left: 4px; }
.lhead .hl, .lhead .hp { padding-left: 5px; }
.dot { width: 7px; height: 7px; margin-left: 3px; border-radius: 50%; background: #a8a8a8; }
.lbody, .tbody { flex: 1; min-height: 0; overflow: hidden; }
.sw1 { width: 13px; height: 13px; background: #232323; }
.sw1.none { background: none; }
.sw1 svg { width: 13px; height: 13px; color: #b4b4b4; }
.twb { width: 18px; height: 14px; display: grid; place-items: center; }
.twb svg { width: 9px; height: 9px; }
.lab { width: 12px; height: 12px; }
.num { padding-left: 4px; }
.white { width: 14px; height: 14px; background: #fff; border: 1px solid #000; margin-left: 1px; }
.kind { width: 16px; height: 14px; }
.nm { height: 16px; line-height: 15px; padding-left: 4px; overflow: hidden; }
.whip { width: 13px; height: 13px; margin-left: 5px; }
.lrow .pick { height: 15px; border: 0; background: #1f1f1f; border-radius: 0; }
.lrow .pick select { line-height: 15px; }
.lrow.sel { background: #434343; }
.lrow.sel .nm { background: #9c9c9c; color: #1b1b1b; }
.lrow.sel .sw1 { background: #3a3a3a; }
.tracks { position: relative; flex: 1; min-width: 0; overflow: hidden; display: flex; flex-direction: column; background: #232323; }
.navbar, .workarea { flex: none; padding: 0 7px; background: radial-gradient(#2d8ceb, #2d8ceb) left / 6px 100% no-repeat, radial-gradient(#2d8ceb, #2d8ceb) right / 6px 100% no-repeat, #232323; border: solid #000; border-width: 1px 0; border-radius: 5px; }
.navbar { height: 10px; }
.range { display: block; height: 100%; background: #666; }
.ruler { position: relative; height: 19px; flex: none; }
.tick { position: absolute; bottom: 0; width: 40px; margin-left: -20px; text-align: center; line-height: 14px; padding-bottom: 5px; background: linear-gradient(#808080, #808080) center bottom / 1px 4px no-repeat; }
.workarea { position: relative; height: 17px; }
.mark { position: absolute; top: 1px; width: 18px; height: 11px; background: #b4b4b4; border: 1px solid #222; border-radius: 2px; font-size: 10px; line-height: 9px; text-align: center; color: #222; }
.mark::before { content: ""; position: absolute; left: -6px; top: 5px; width: 9px; height: 8px; background: #b4b4b4; clip-path: polygon(50% 0, 100% 50%, 100% 100%, 0 100%, 0 50%); }
.cache { position: relative; height: 4px; flex: none; border-bottom: 1px solid #000; }
.cache i { position: absolute; top: 0; width: 2px; height: 3px; background: #24a83a; }
.track { position: relative; height: 17px; border-bottom: 1px solid #262626; background: #333; }
.track::before { content: ""; position: absolute; inset: 0 7px; background: #3d3d3d; }
.track.sel, .track.sel::before { background: #4f4f4f; }
.bar1 { position: absolute; top: 0; bottom: 0; }
.red { background: #7a3a3c; }
.purple { background: #757283; }
.tanb { background: #736858; }
.teal { background: #728480; }
.hot { background: #a6a2c9; }
.teald { background: #4a524f; border: 1px solid #5b6d68; border-radius: 2px; }
.tand { background: #4b463f; border: 1px solid #605440; border-radius: 2px; }
.cut::before { content: ""; position: absolute; left: 1px; top: 1px; border: 3px solid transparent; border-left-color: #3b4340; border-top-color: #3b4340; }
.playhead { position: absolute; top: 15px; bottom: 0; left: 35.8%; width: 1px; background: #3f8bda; }
.playhead svg { position: absolute; left: -6px; top: 0; }
.vscroll { width: 18px; flex: none; background: #1c1c1c; display: flex; flex-direction: column; align-items: center; gap: 4px; padding: 32px 1px 0 2px; }
.vscroll .thumb { flex: none; width: 16px; height: 65%; border-radius: 8px; background: #303030; margin-top: 2px; }
.tlfoot { height: 17px; flex: none; display: flex; align-items: center; padding-left: 5px; background: linear-gradient(#000, #000) left top / 504px 1px no-repeat; color: #b4b4b4; }
.tlfoot svg { width: 13px; height: 13px; margin-right: 5px; }
.tlfoot .hs { width: 14px; height: 10px; margin: 0 6px 0 342px; }
.tlfoot .hb { width: 17px; height: 10px; margin-left: 11px; }
.tlfoot input { appearance: none; width: 50px; height: 2px; background: #484848; }
.tlfoot input::-webkit-slider-thumb { appearance: none; width: 10px; height: 10px; border: 2px solid #969696; border-radius: 50%; background: #232323; }

.bottom { min-height: 0; display: grid; grid-template-columns: minmax(0, 321fr) minmax(0, 845fr) minmax(0, 207fr); gap: 4px; }
.bottom .tabs { height: 29px; padding-top: 1px; }
.project .tabs { padding-left: 13px; }
.info { display: flex; gap: 6px; height: 71px; margin: 5px 0 0 6px; flex: none; }
.preview { width: 37px; height: 65px; background: #000; display: grid; place-items: center; }
.preview i { width: 13px; height: 13px; border-radius: 50%; background: #e6cdf2; margin-right: 1px; }
.meta { white-space: nowrap; font-size: 10px; line-height: 13px; margin-top: -1px; }
.meta strong { display: block; font-size: 11px; font-weight: 600; }
.meta span { display: block; }
.tri { display: inline-block; margin-left: 2px; border: 4px solid transparent; border-top: 5px solid #fff; border-bottom: 0; vertical-align: 1px; }
.find.wide { width: auto; margin: 34px 7px 7px 6px; flex: none; }
.plist { position: relative; flex: 1; min-height: 0; overflow: hidden; border-top: 1px solid #000; border-bottom: 1px solid #000; }
table { width: 100%; border-collapse: collapse; table-layout: fixed; }
th { height: 19px; padding: 0; background: #333; border-bottom: 1px solid #000; font-size: 10px; font-weight: 400; text-align: left; }
th svg { width: 12px; height: 12px; margin-left: 5px; }
.c1 { width: 16px; }
.c3 { width: 21px; }
.c4 { width: 35px; padding-left: 5px; }
.c2, .c3, .c4 { background: linear-gradient(#191919, #191919) left center / 1px 11px no-repeat, #333; }
.c2 { padding-left: 6px; }
td { height: 19px; padding: 0; border-bottom: 1px solid #1e1e1e; line-height: 18px; white-space: nowrap; overflow: hidden; }
td svg { width: 9px; height: 9px; margin-left: 1px; }
.item { display: flex; align-items: center; height: 18px; }
.item svg { width: 16px; height: 14px; margin: 0 1px; }
.item span { flex: 1; padding-left: 3px; margin-right: 1px; }
tr.sel { background: #333; }
tr.sel .item span { background: #9c9c9c; color: #1b1b1b; }
td .lab2 { display: block; width: 10px; height: 10px; margin-left: 6px; }
td:last-child { padding-left: 8px; color: #777; }
.pscroll { position: absolute; right: 0; top: 19px; bottom: 0; width: 19px; background: #1d1d1d; display: flex; flex-direction: column; align-items: center; gap: 3px; padding: 3px 1px 0 0; }
.pscroll svg { width: 13px; height: 13px; }
.pscroll i { width: 15px; height: 39px; border-radius: 7px; background: #303030; }
.pfoot { height: 18px; flex: none; display: flex; align-items: center; gap: 9px; padding-left: 4px; }
.pfoot svg { width: 15px; height: 13px; }
.pfoot svg.w { width: 17px; }
.dimc { color: #666; }
.bpc { width: 46px; height: 16px; margin: 0 0 0 -3px; border: 1px solid #303030; font-size: 9px; line-height: 12px; }
.ht { width: 42px; height: 15px; border-radius: 7px; background: #303030; }

.effects .tabs { padding-left: 7px; }
.effects .lk { margin: 0 6px 3px 9px; }
.subt { height: 20px; flex: none; padding: 2px 0 0 5px; border-bottom: 1px solid #000; line-height: 15px; }
.props { padding-right: 17px; }
.prop { height: 17px; display: flex; align-items: center; border-bottom: 1px solid #1e1e1e; background: #262626; }
.prop.tall { height: 57px; align-items: flex-start; }
.prop.head { background: #202020; border-color: #202020; }
.prop.keyed { background: #2b261b; }
.pl { width: 438px; height: 16px; flex: none; display: flex; align-items: center; padding-left: 20px; }
.head .pl { padding-left: 4px; }
.head b { font-weight: 600; }
.head em { font: italic bold 14px/14px "Liberation Serif", serif; color: #c0c0c0; margin: 0 4px 0 6px; width: 13px; }
.tw { width: 9px; height: 9px; margin-right: 5px; }
.head .tw { margin-right: 0; }
.st { width: 13px; height: 14px; margin-right: 4px; }
.head .st { margin: 0 6px 0 0; }
.off { color: #4b4b4b; }
.aim { width: 22px; height: 15px; display: grid; place-items: center; border: 1px solid #8a8a8a; margin-right: 6px; }
.aim svg { width: 12px; height: 12px; }
.prop label { display: flex; align-items: center; gap: 5px; }
.prop input { appearance: none; width: 12px; height: 12px; border-radius: 2px; background: #999 url("data:image/svg+xml,%3Csvg xmlns='http://www.w3.org/2000/svg' viewBox='0 0 12 12'%3E%3Cpath d='m2.500 6 2.500 3 5-6' fill='none' stroke='%23222' stroke-width='2'/%3E%3C/svg%3E"); }
.angle { line-height: 16px; }
.dial { width: 35px; height: 35px; margin-top: 2px; fill: none; stroke: #8c8c8c; stroke-width: 2; }
.bil { width: 128px; height: 16px; }

.side { min-height: 0; display: flex; flex-direction: column; gap: 4px; }
.align { height: 128px; flex: none; }
.align .tabs { padding-left: 13px; }
.alto { display: flex; align-items: center; justify-content: space-between; margin: 2px 4px 0 7px; color: #858585; white-space: nowrap; }
.alto .pick { width: 112px; height: 18px; }
.arow { display: flex; justify-content: space-between; padding: 6px 7px 0 11px; color: #b0b0b0; }
.arow svg { width: 18px; height: 18px; }
.arow.faint { color: #484848; padding-top: 2px; }
.r90 { transform: rotate(90deg); }
.r180 { transform: rotate(180deg); }
.r270 { transform: rotate(-90deg); }
.dist { margin: 4px 6px 0; border-top: 2px solid #303030; color: #858585; padding-top: 1px; line-height: 17px; }
.char { flex: 1; }
.ctabs { height: 26px; flex: none; display: flex; align-items: center; padding-top: 2px; color: #858585; }
.ctabs .act { display: flex; align-items: center; height: 24px; margin: 0 auto 0 38px; padding: 0 1px; border-bottom: 2px solid #b8b8b8; color: #c0c0c0; }
.ctabs .mo { margin-right: 4px; }
.fonts { display: flex; margin: 10px 7px 0 5px; padding-bottom: 6px; border-bottom: 2px solid #303030; }
.fsel { flex: 1; display: flex; flex-direction: column; gap: 6px; }
.fsel .pick { height: 18px; background: linear-gradient(#303030, #303030) right 17px top / 1px 100% no-repeat, #1a1a1a; }
.fsel select { padding-top: 1px; }
.fmid { width: 30px; display: flex; flex-direction: column; align-items: center; gap: 6px; padding-top: 2px; }
.fmid svg { width: 17px; height: 17px; }
.bw { width: 20px; height: 17px; border: 1px solid #aaa; background: linear-gradient(#000 50%, #fff 50%); }
.chars { display: flex; flex-direction: column; margin: 0 7px 0 5px; padding-bottom: 5px; border-bottom: 2px solid #303030; }
.cr { display: grid; grid-template-columns: 25px 44px 36px 33px 43px 15px; height: 22px; align-items: center; white-space: nowrap; }
.cr i, .strokerow i { font-style: normal; font-size: 9px; color: #858585; }
.cr > i { text-align: left; }
.metrics { color: #4b4b4b; }
.g { display: flex; align-items: flex-end; font: bold 19px/18px "Liberation Serif", serif; color: #b4b4b4; }
.g small { font-size: 13px; line-height: 14px; }
.g.sans { font: 12px/16px "Open Sans", sans-serif; }
.g.lead { font: 13px/15px "Open Sans", sans-serif; align-items: center; padding-left: 1px; }
.g.lead span { border: solid #b4b4b4; border-width: 1px 0; line-height: 14px; }
.stackg { display: flex; flex-direction: column; align-items: flex-start; gap: 1px; }
.lr { width: 18px; height: 5px; }
.g.inv { width: 18px; height: 12px; background: #b4b4b4; color: #222; font: bold 11px/12px "Open Sans", sans-serif; justify-content: center; }
.g.wide-t { width: 18px; line-height: 14px; justify-content: center; }
.g.jp { font: 12px/14px "Noto Sans CJK JP", sans-serif; padding-left: 4px; }
.ud { width: 5px; height: 15px; margin-right: 2px; }
.strokerow { display: grid; grid-template-columns: 25px 10px 34px 12px 1fr; align-items: center; height: 31px; margin: 0 7px 0 5px; border-bottom: 2px solid #303030; }
.strokerow .val { text-align: left; }
.ln { width: 16px; height: 14px; }
.strokerow .pick { height: 19px; }
.styles { display: flex; justify-content: space-between; padding: 6px 28px 0 26px; font: 15px/18px "Liberation Serif", serif; color: #b4b4b4; }
.styles small, .styles sup, .styles sub { font-size: 10px; line-height: 1px; }
.styles sub { vertical-align: -2px; }

.callout { position: absolute; left: 491px; top: 622px; }
.cursor { position: absolute; left: 1148px; top: 262px; }
```
FILE: app.js
```js
const svg = (id, cls = "") => `<svg class="${cls}"><use href="#${id}"/></svg>`;
const VIEW = 965; // width of the time view, in timeline units
const ZERO = 7; // start of the composition
const SECOND = 24.22;
const pct = (u) => (u / VIEW) * 100 + "%";

const LABEL = { red: "#b33838", lav: "#aca8cc", tan: "#a89677", aqua: "#a9ccc5" };
const A = "[Adjust... Layer 3]";
const R = "[Reel For DSS.mp4]";

// label, source icon, name, bars: [style, start, end]
const layers = [
  ["red", "solid", "White Solid", [["red", 199, 852]]],
  ["lav", "solid", "HyperZo...ransition", [["purple", 7, 851]]],
  ["lav", "solid", "Beat Thump", [["purple", 219, 853]]],
  ["tan", "comp", "[Music]", [["tanb cut", 6, 958]]],
  ["lav", "solid", A, [["purple", 841, 853]]],
  ["aqua", "clip", "[DSS Of...lide).mp4]", [["teald", 841, 963], ["teal", 853, 958]]],
  ["aqua", "clip", "[DSS Of...lide).mp4]", [["teald", 841, 963], ["teal cut", 841, 853]]],
  ["lav", "solid", A, [["purple", 734, 747]]],
  ["aqua", "clip", R, [["teald", -4, 860], ["teal", 747, 854]]],
  ["aqua", "clip", R, [["teald", -4, 860], ["teal", 734, 747]]],
  ["lav", "solid", A, [["hot", 679, 692]]],
  ["tan", "comp", "[C0029....Comp 1]", [["tand", 679, 798], ["tanb", 692, 747]]],
  ["tan", "comp", "[C0029....Comp 1]", [["tand", 679, 798], ["tanb cut", 679, 692]]],
  ["lav", "solid", A, [["purple", 629, 642]]],
  ["aqua", "clip", "[dala pre..mp4]", [["teald", 626, 969], ["teal", 642, 692]]],
  ["aqua", "clip", "[dala pre..mp4]", [["teald", 629, 969], ["teal cut", 629, 642]]],
  ["lav", "solid", A, [["purple", 524, 537]]],
  ["aqua", "clip", R, [["teald", 80, 874], ["teal", 537, 642]]],
  ["aqua", "clip", R, [["teald", 80, 874], ["teal", 524, 537]]],
  ["lav", "solid", A, [["purple", 470, 483]]],
  ["aqua", "clip", R, [["teald", -4, 739], ["teal", 483, 537]]],
  ["aqua", "clip", R, [["teald", -4, 739], ["teal", 470, 483]]],
  ["lav", "solid", A, [["purple", 416, 429]]],
  ["aqua", "clip", "[04.mp4]", [["teald", 416, 656], ["teal", 429, 483]]],
  ["aqua", "clip", "[04.mp4]", [["teald", 416, 656], ["teal cut", 416, 429]]],
  ["lav", "solid", A, [["purple", 365, 378]]],
  ["tan", "comp", "[Pre-comp 1]", [["tand", 365, 766], ["tanb", 378, 432]]],
  ["tan", "comp", "[Pre-comp 1]", [["tand", 365, 766], ["tanb cut", 365, 378]]],
  ["lav", "solid", A, [["purple", 312, 325]]],
  ["aqua", "clip", "[2.mp4]", [["teald", 312, 610], ["teal", 325, 377]]],
  ["aqua", "clip", "[2.mp4]", [["teald", 312, 610], ["teal cut", 312, 325]]],
  ["lav", "solid", A, [["purple", 259, 272]]],
];
const SELECTED = 11;

let list = "";
let tracks = "";
layers.forEach(([label, icon, name, bars], i) => {
  const n = i + 1;
  const sel = n === SELECTED ? " sel" : "";
  const audio = n > 8 && icon !== "solid";
  const source = icon === "solid" ? '<i class="white"></i>' : svg(icon, "kind");
  list += `<div class="lrow${sel}">
    <button class="sw1" aria-label="Video">${svg("eye")}</button>
    <button class="sw1${audio ? "" : " none"}" aria-label="Audio">${n === 4 ? svg("speaker") : ""}</button>
    <button class="sw1" aria-label="Solo"></button><button class="sw1" aria-label="Lock"></button>
    <button class="twb" aria-label="Expand">${svg("twirl")}</button>
    <i class="lab" style="background:${LABEL[label]}"></i><span class="num">${n}</span>${source}
    <span class="nm">${name}</span>${svg("whip", "whip")}
    <div class="pick"><select aria-label="Parent of layer ${n}"><option>None</option></select>${svg("chev")}</div></div>`;
  tracks += `<div class="track${sel}">` + bars.map(([c, a, b]) =>
    `<i class="bar1 ${c}" style="left:${pct(a)};width:${pct(b - a)}"></i>`).join("") + "</div>";
});
document.getElementById("layers").innerHTML = list;
document.getElementById("tracks").innerHTML = tracks;

let ticks = "";
for (let s = 0; s <= 35; s += 5) {
  const text = s === 0 ? "0:00s" : String(s).padStart(2, "0") + "s";
  ticks += `<span class="tick" style="left:${pct(ZERO + s * SECOND)}">${text}</span>`;
}
document.getElementById("ruler").innerHTML = ticks;
document.getElementById("workarea").insertAdjacentHTML("beforeend",
  [[1, 221], [2, 484]].map(([n, u]) => `<span class="mark" style="left:${pct(u)}">${n}</span>`).join(""));
document.getElementById("cache").innerHTML =
  [346, 382, 400].map((u) => `<i style="left:${pct(u)}"></i>`).join("");

const items = ["Solids", "00163.MTS Comp 1", "29 Jan (Highlights Reel for DSS)", "C0029.MP4 Comp 1", "Comp 2",
  "Dec Shot 1 Comp 1", "Heart Layer Comp 1", "Music", "outro"];
document.getElementById("items").innerHTML = items.map((name, i) => `<tr class="${i === 2 ? "sel" : ""}">
  <td>${i ? "" : svg("twirl")}</td>
  <td><div class="item">${svg(i ? "comp" : "folder")}<span>${name}</span></div></td>
  <td><i class="lab2" style="background:${i ? LABEL.tan : "#e5d84a"}"></i></td>
  <td>${i ? "Composition" : "Folder"}</td></tr>`).join("");
```
